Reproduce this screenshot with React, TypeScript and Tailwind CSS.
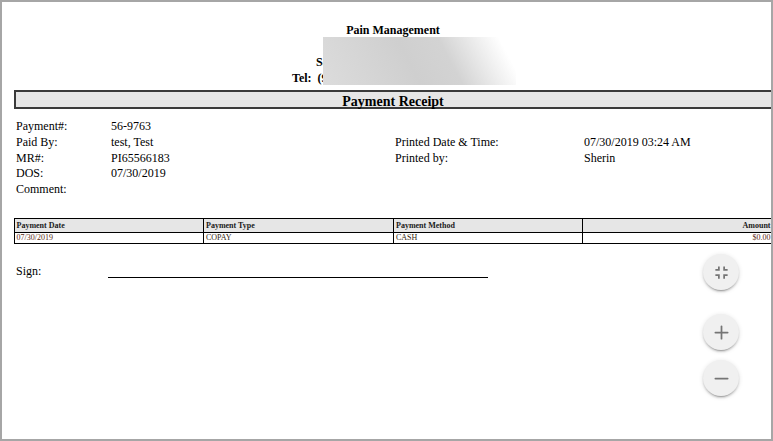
import { Minus, Plus } from 'lucide-react'

const fab =
  'flex h-9 w-9 items-center justify-center rounded-full bg-[#f0f0f0] text-[#757575] shadow-[0_3px_1px_-2px_rgba(0,0,0,0.2),0_2px_2px_0_rgba(0,0,0,0.14),0_1px_5px_0_rgba(0,0,0,0.12)]'

export default function App() {
  return (
    <div className="relative h-[441px] w-[773px] overflow-hidden border-2 border-[#a6a6a6] bg-white font-['Liberation_Serif',serif] text-black">
      {/* 抬头 */}
      <div className="pt-[21px] text-[12px] font-bold leading-[15.5px]">
        <div className="pl-[13px] text-center">Pain Management</div>
        <div className="mt-[16.5px] pl-[314px]">Sa</div>
        <div className="whitespace-pre pl-[290px]">Tel:  (9</div>
      </div>
      {/* 打码 */}
      <div className="absolute left-[321px] top-[35px] h-[48px] w-[193px] bg-[linear-gradient(62deg,#dcdcdc_0%,#cfcfcf_45%,#d3d3d3_64%,#ffffff_92%)]" />

      {/* 标题 */}
      <div className="ml-[11.5px] mt-[3.5px] h-[19px] w-[760px] border-y-2 border-l-2 border-[#3a3a3a] bg-[#e6e6e6] pr-[3px] pt-[1px] text-center text-[14px] font-bold leading-[17px]">
        Payment Receipt
      </div>

      {/* 信息 */}
      <div className="ml-[14px] mt-[10px] grid grid-cols-[95px_284px_189px_1fr] grid-rows-[16px_16px_15.5px_15.5px_15.75px] text-[12px] leading-[15.75px]">
        <div>Payment#:</div>
        <div>56-9763</div>
        <div></div>
        <div></div>
        <div>Paid By:</div>
        <div>test, Test</div>
        <div>Printed Date &amp; Time:</div>
        <div>07/30/2019 03:24 AM</div>
        <div>MR#:</div>
        <div>PI65566183</div>
        <div>Printed by:</div>
        <div>Sherin</div>
        <div>DOS:</div>
        <div>07/30/2019</div>
        <div></div>
        <div></div>
        <div>Comment:</div>
      </div>

      {/* 表格 */}
      <table className="ml-[11.5px] mt-[21px] w-[760px] table-fixed border-collapse text-[8px] leading-[10px]">
        <thead>
          <tr className="h-[14px] bg-[#e6e6e6] font-bold text-[#1a1a1a]">
            <th className="w-[189.5px] border-[1.5px] border-black px-[2px] pt-[1px] text-left">Payment Date</th>
            <th className="w-[190px] border-[1.5px] border-black px-[2px] pt-[1px] text-left">Payment Type</th>
            <th className="w-[188.5px] border-[1.5px] border-black px-[2px] pt-[1px] text-left">Payment Method</th>
            <th className="border-[1.5px] border-black px-[2px] pt-[1px] text-right">Amount</th>
          </tr>
        </thead>
        <tbody>
          <tr className="h-[11px]">
            <td className="border-[1.5px] border-black px-[2px] text-[#5a2a14]">07/30/2019</td>
            <td className="border-[1.5px] border-black px-[2px] text-[#33240f]">COPAY</td>
            <td className="border-[1.5px] border-black px-[2px] text-[#33240f]">CASH</td>
            <td className="border-[1.5px] border-black px-[2px] text-right text-[#5a2a14]">$0.00</td>
          </tr>
        </tbody>
      </table>

      {/* 签名 */}
      <div className="ml-[14px] mt-[20px] flex items-end text-[12px] leading-[15px]">
        <div className="w-[92px]">Sign:</div>
        <div className="mb-[1px] h-[1.5px] w-[380px] bg-black" />
      </div>

      {/* 缩放按钮 */}
      <div className="absolute left-[701px] top-[252px] flex flex-col">
        <button className={fab}>
          <svg width="21" height="21" viewBox="0 0 24 24" fill="currentColor">
            <path d="M5 16h3v3h2v-5H5v2zm3-8H5v2h5V5H8v3zm6 11h2v-3h3v-2h-5v5zm2-11V5h-2v5h5V8h-3z" />
          </svg>
        </button>
        <button className={`${fab} mt-6`}>
          <Plus size={21} strokeWidth={2} />
        </button>
        <button className={`${fab} mt-2.5`}>
          <Minus size={21} strokeWidth={2} />
        </button>
      </div>
    </div>
  )
}
